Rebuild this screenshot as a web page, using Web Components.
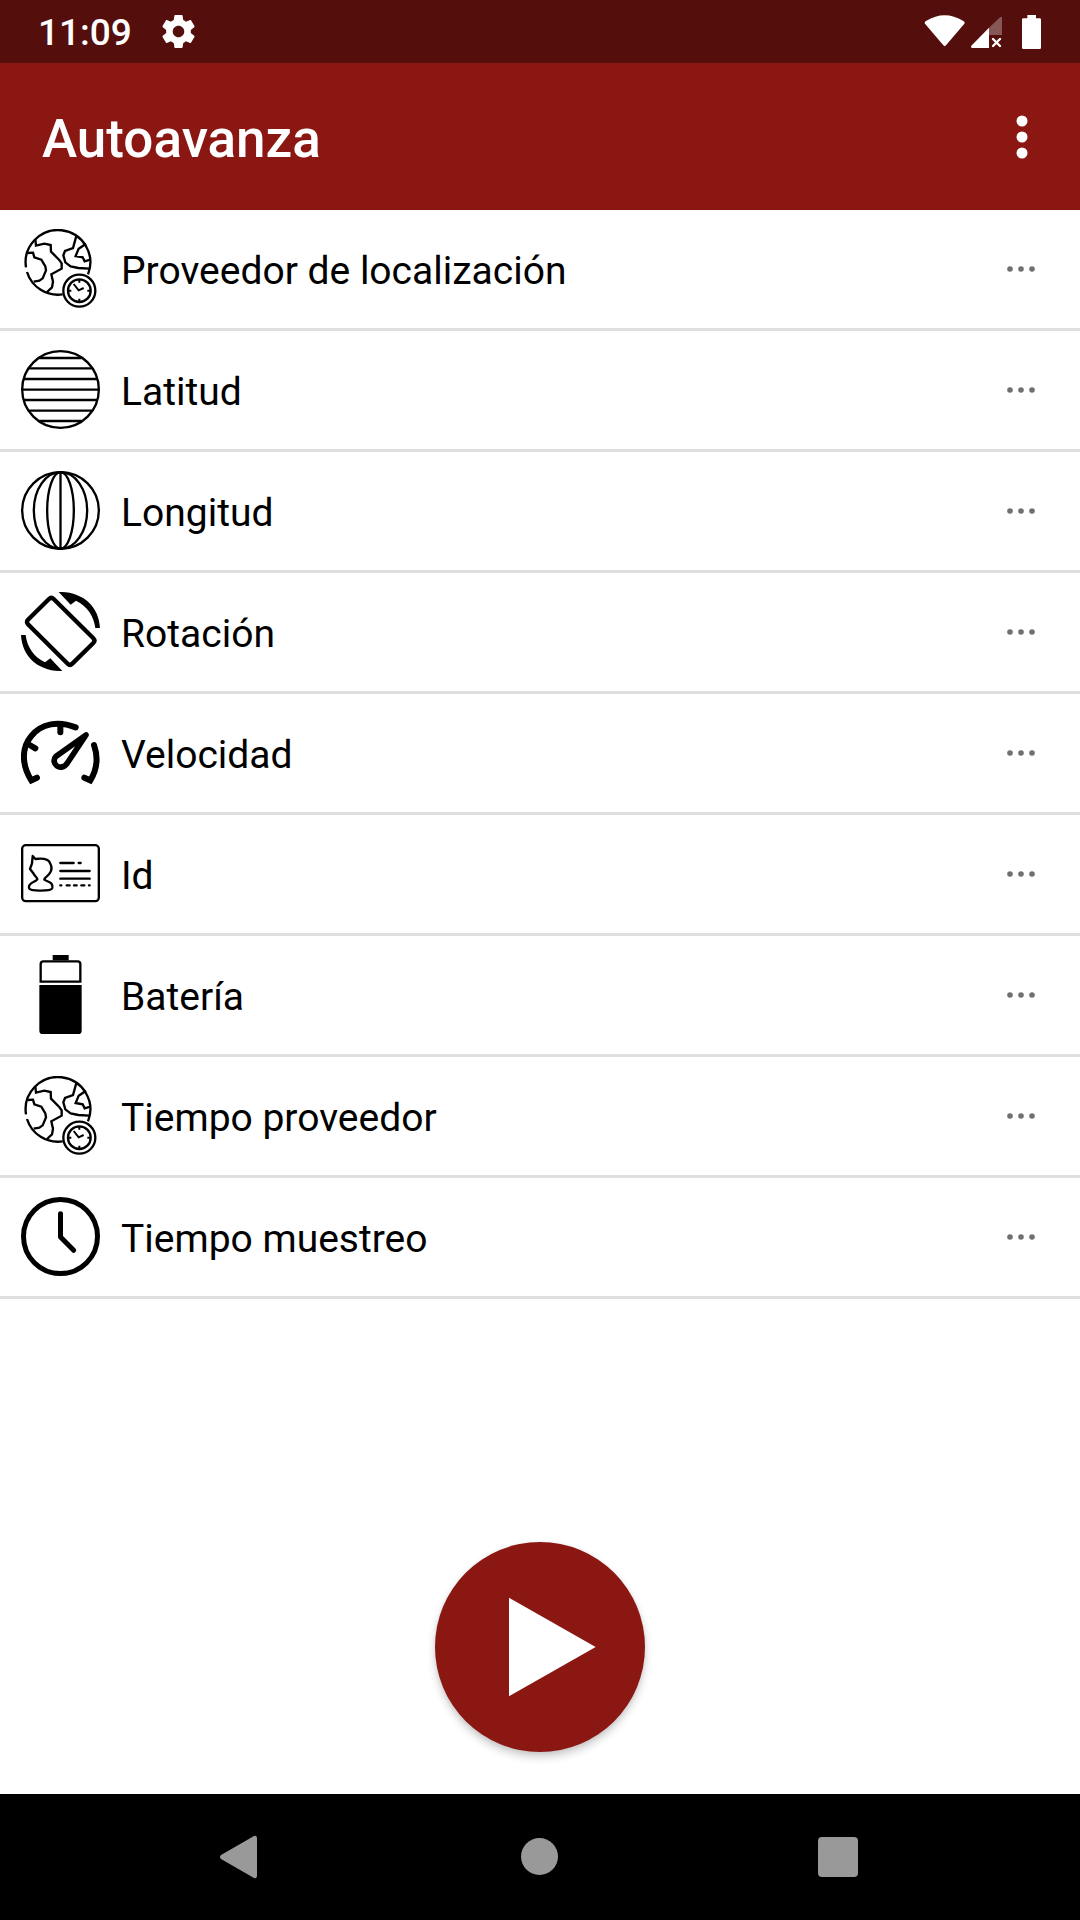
<!DOCTYPE html>
<html lang="es">
<head>
<meta charset="utf-8">
<meta name="viewport" content="width=device-width, initial-scale=1">
<title>Autoavanza</title>
<style>
  body { margin: 0; font-family: Roboto, "Noto Sans", sans-serif; background: #fff; color: #000; }
</style>
</head>
<body>
<phone-screen>
  <status-bar slot="top" time="11:09"></status-bar>
  <app-bar slot="top">Autoavanza</app-bar>
  <data-row icon="globe">Proveedor de localización</data-row>
  <data-row icon="latitude">Latitud</data-row>
  <data-row icon="longitude">Longitud</data-row>
  <data-row icon="rotation">Rotación</data-row>
  <data-row icon="speed">Velocidad</data-row>
  <data-row icon="card">Id</data-row>
  <data-row icon="battery">Batería</data-row>
  <data-row icon="globe">Tiempo proveedor</data-row>
  <data-row icon="clock">Tiempo muestreo</data-row>
  <play-button slot="action"></play-button>
  <nav-bar slot="bottom"></nav-bar>
</phone-screen>

<script>
const ICONS = {
  globe: `<svg viewBox="63 57 237 237" fill="none" stroke="#000" stroke-width="7">
    <path d="M78 172A97 97 0 1 1 264 193M81 186A97 97 0 0 0 188 253"/>
    <path d="M106 88L108 107L133 101L152 105L153 125L177 149L185 160V176L154 193L159 215L156 232L141 246"/>
    <path d="M83 129L99 128L103 142L124 149L136 169L138 181L128 205L118 212L101 215"/>
    <path d="M229 78L219 114L195 123L190 136L196 157L212 169L235 174L267 176"/>
    <path d="M258 101L236 116L227 138L248 142L254 154L271 149"/>
    <circle cx="238" cy="242" r="48"/><circle cx="238" cy="242" r="34"/>
    <path d="M221 222L236 241L251 234M238 210V218M238 266V274M206 242H214M262 242H270" stroke-width="6"/></svg>`,
  latitude: `<svg viewBox="63 60 237 237" fill="none" stroke="#000" stroke-width="7">
    <circle cx="181.500" cy="178.500" r="115"/>
    <path d="M118 84H245M87 115H276M71 147H292M66 179H297M71 210H292M87 242H276M118 273H245"/></svg>`,
  longitude: `<svg viewBox="63 423 237 237" fill="none" stroke="#000" stroke-width="7">
    <circle cx="181.500" cy="541.500" r="115"/>
    <ellipse cx="181.500" cy="541.500" rx="80" ry="115"/>
    <ellipse cx="181.500" cy="541.500" rx="40" ry="115"/>
    <path d="M181.500 426V657"/></svg>`,
  rotation: `<svg viewBox="63 66 237 237">
    <path d="M147 87Q154 80 161 87L280 205Q287 212 280 219L217 281Q210 288 203 281L84 163Q78 156 84 149Z" fill="none" stroke="#000" stroke-width="13"/>
    <path d="M176 66C246 64 297 108 300 174H286C282 139 262 108 228 92L212 104Z"/>
    <path d="M187 303C117 305 66 261 63 195H77C81 230 101 261 135 277L151 265Z"/></svg>`,
  speed: `<svg viewBox="63 429 237 237" fill="none" stroke="#000" stroke-width="18" stroke-linecap="round">
    <path d="M111 623L94 631C64 584 65 533 93 499C124 459 176 452 227 472" stroke-linejoin="miter"/>
    <path d="M181 465V487M89 525L106 535"/>
    <path d="M282 525C295 562 292 597 271 631L253 623"/>
    <path d="M258 495L202 579C194 592 180 594 171 588C160 580 160 567 168 559Z" stroke-width="17" stroke-linejoin="round"/></svg>`,
  card: `<svg viewBox="63 72 237 237" fill="none" stroke="#000" stroke-width="7">
    <rect x="66.500" y="105.500" width="230" height="168" rx="11"/>
    <path d="M98 138L106 147C130 144 146 148 150 159C156 170 156 181 149 190C144 200 133 201 133 209C142 216 160 215 157 234C155 244 89 245 87 234C84 216 105 218 112 208C112 202 104 199 100 190L90 177L96 160Z" stroke-linejoin="round"/>
    <path d="M181 159H221M236 159H242M181 183H269M181 206H269M181 226H184M200 226H209M222 226H230M244 226H253M267 226H269" stroke-linecap="round"/></svg>`,
  battery: `<svg viewBox="63 435 237 237">
    <path d="M158 435H206V451H158Z"/>
    <path d="M122 515V462Q122 454 130 454H233Q241 454 241 462V515Z" fill="none" stroke="#000" stroke-width="7"/>
    <path d="M118 525H245V662Q245 672 235 672H128Q118 672 118 662Z"/></svg>`,
  clock: `<svg viewBox="63 411 237 237" fill="none" stroke="#000" stroke-width="15">
    <circle cx="181.500" cy="529.500" r="111"/>
    <path d="M181.500 461V531L221 571" stroke-linecap="round" stroke-linejoin="round"/></svg>`
};

function define(name, html, setup) {
  const template = document.createElement('template');
  template.innerHTML = html;
  customElements.define(name, class extends HTMLElement {
    constructor() {
      super();
      this.attachShadow({ mode: 'open' }).append(template.content.cloneNode(true));
    }
    connectedCallback() { if (setup) setup(this, this.shadowRoot); }
  });
}

const BUTTON_RESET = `button { display: flex; align-items: center; justify-content: center;
  margin: 0; padding: 0; border: 0; background: none; color: inherit; cursor: pointer; }
  svg { display: block; }`;

define('phone-screen', `<style>
  :host { display: flex; flex-direction: column; min-height: 100vh; }
  main { flex: 1; display: flex; flex-direction: column; justify-content: space-between; align-items: center; gap: 42px; padding-bottom: 42px; }
  .list { align-self: stretch; }
</style>
<slot name="top"></slot>
<main><div class="list" role="list"><slot></slot></div><slot name="action"></slot></main>
<slot name="bottom"></slot>`);

define('status-bar', `<style>
  :host { display: flex; align-items: center; justify-content: space-between; height: 63px; padding: 0 36px 0 38px; background: #540f0d; color: #fff; }
  div { display: flex; align-items: center; }
  .left { gap: 30px; }
  time { font-size: 37px; line-height: 44px; font-weight: 500; padding-top: 2px; }
  svg { display: block; fill: currentColor; }
</style>
<div class="left"><time></time>
  <svg width="33" height="33" viewBox="2.250 2 19.500 20" role="img" aria-label="Ajustes"><path d="M19.430 12.980c.04-.32.07-.64.07-.98s-.03-.66-.07-.98l2.110-1.650c.19-.15.24-.42.12-.64l-2-3.460c-.12-.22-.39-.3-.61-.22l-2.490 1c-.52-.4-1.080-.73-1.690-.98l-.38-2.650C14.460 2.180 14.250 2 14 2h-4c-.25 0-.46.18-.49.42l-.38 2.650c-.61.25-1.170.59-1.690.98l-2.490-1c-.23-.09-.49 0-.61.22l-2 3.460c-.13.22-.07.49.12.64l2.110 1.650c-.04.32-.07.65-.07.98s.03.66.07.98l-2.110 1.650c-.19.15-.24.42-.12.64l2 3.460c.12.22.39.3.61.22l2.490-1c.52.4 1.080.73 1.690.98l.38 2.650c.03.24.24.42.49.42h4c.25 0 .46-.18.49-.42l.38-2.650c.61-.25 1.170-.59 1.690-.98l2.490 1c.23.09.49 0 .61-.22l2-3.460c.12-.22.07-.49-.12-.64l-2.110-1.650zM12 15.500c-1.930 0-3.500-1.570-3.500-3.500s1.570-3.500 3.500-3.500 3.500 1.570 3.500 3.500-1.570 3.500-3.500 3.500z"/></svg>
</div>
<div><svg width="120" height="36" viewBox="132 39 360 108" role="img" aria-label="Wi-Fi, sin señal móvil, batería cargada">
  <path d="M135 68Q132 63 138 60Q194 25 250 60Q256 63 253 68L198 133Q194 138 190 133Z"/>
  <path d="M327 80L361 48Q366 45 366 51V102H327Z" opacity=".3"/>
  <path d="M327 80V141H276Q271 140 274 134Z"/>
  <path d="M339 114L360 135M360 114L339 135" fill="none" stroke="currentColor" stroke-width="7" stroke-linecap="round"/>
  <path d="M442 42H468V52H479Q483 52 483 56V140Q483 144 479 144H430Q426 144 426 140V56Q426 52 430 52H442Z"/></svg></div>`,
  (host, root) => { root.querySelector('time').textContent = host.getAttribute('time'); });

define('app-bar', `<style>
  ${BUTTON_RESET}
  :host { display: flex; align-items: center; justify-content: space-between; height: 147px; padding: 0 6px 0 42px; background: #8b1713; color: #fff; }
  h1 { margin: 0; padding-top: 4px; font-size: 53px; line-height: 62px; font-weight: 500; }
  button { width: 104px; height: 126px; }
</style>
<h1><slot></slot></h1>
<button type="button" aria-label="Más opciones"><svg width="12" height="44" viewBox="0 0 12 44" fill="currentColor"><circle cx="6" cy="6" r="5.500"/><circle cx="6" cy="22" r="5.500"/><circle cx="6" cy="38" r="5.500"/></svg></button>`);

define('data-row', `<style>
  ${BUTTON_RESET}
  :host { display: flex; align-items: center; gap: 21px; height: 117px; padding: 0 21px 1px; border-bottom: 3px solid #dfdfdf; }
  .icon { flex: none; width: 79px; height: 79px; }
  .label { flex: 1; padding-top: 5px; font-size: 39px; line-height: 46px; }
  button { width: 76px; height: 76px; color: #707070; }
</style>
<div class="icon" aria-hidden="true"></div>
<div class="label"><slot></slot></div>
<button type="button" aria-label="Opciones"><svg width="30" height="8" viewBox="0 0 30 8" fill="currentColor"><circle cx="4" cy="4" r="2.800"/><circle cx="15" cy="4" r="2.800"/><circle cx="26" cy="4" r="2.800"/></svg></button>`,
  (host, root) => {
    host.setAttribute('role', 'listitem');
    root.querySelector('.icon').innerHTML = ICONS[host.getAttribute('icon')];
  });

define('play-button', `<style>
  ${BUTTON_RESET}
  :host { display: block; }
  button { width: 210px; height: 210px; border-radius: 50%; background: #8b1713; color: #fff; box-shadow: 0 5px 8px rgba(0,0,0,.2), 0 1px 4px rgba(0,0,0,.06); }
</style>
<button type="button" aria-label="Iniciar"><svg width="210" height="210" viewBox="0 0 630 630" fill="currentColor"><path d="M222 167L482 315L222 463Z"/></svg></button>`);

define('nav-bar', `<style>
  ${BUTTON_RESET}
  :host { display: block; background: #000; color: #999; }
  nav { display: flex; justify-content: center; height: 126px; }
  button { flex: 0 1 299px; }
</style>
<nav aria-label="Sistema">
  <button type="button" aria-label="Atrás"><svg width="42" height="44" viewBox="0 0 42 44" fill="currentColor"><path d="M1 20L34 1Q37 0 37 4V40Q37 44 34 43L1 24Q-1 22 1 20Z"/></svg></button>
  <button type="button" aria-label="Inicio"><svg width="38" height="38" viewBox="0 0 38 38" fill="currentColor"><circle cx="18.500" cy="18.500" r="18.500"/></svg></button>
  <button type="button" aria-label="Recientes"><svg width="42" height="40" viewBox="0 0 42 40" fill="currentColor"><rect width="40" height="40" rx="4"/></svg></button>
</nav>`);
</script>
</body>
</html>
